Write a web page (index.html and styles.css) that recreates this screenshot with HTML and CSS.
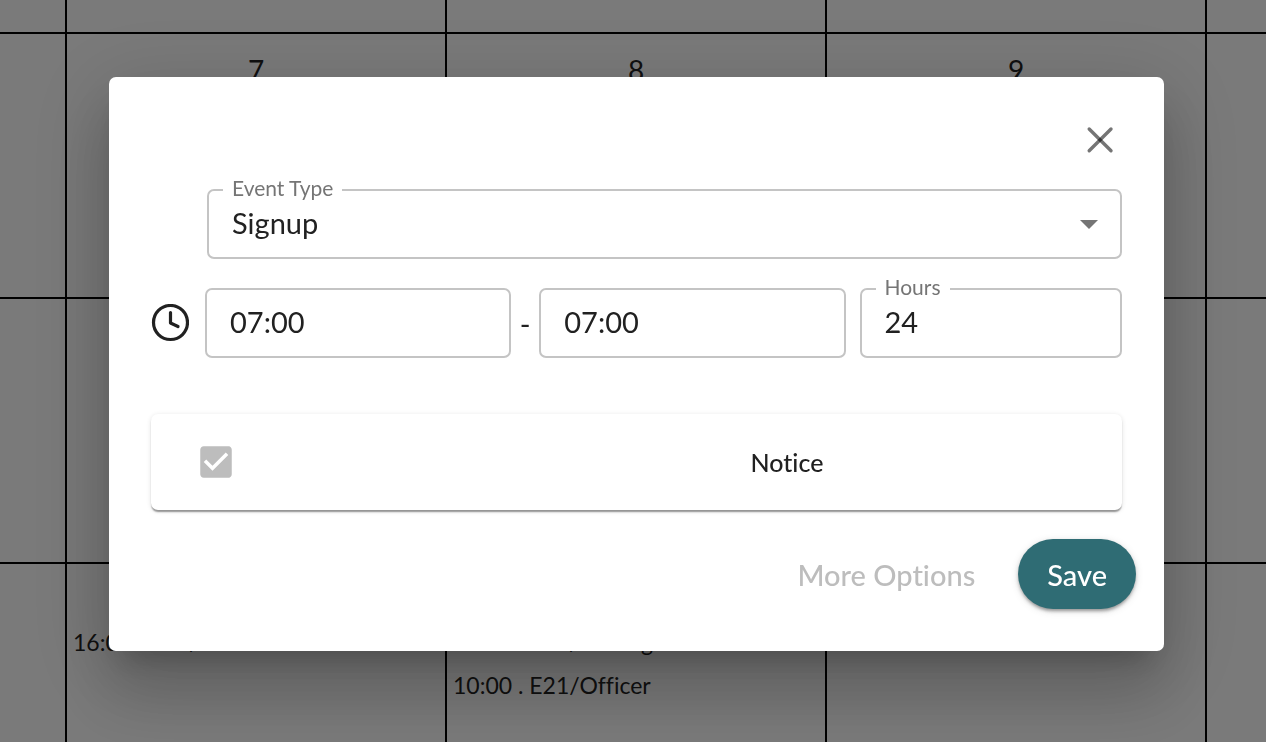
FILE: index.html
```
<!DOCTYPE html>
<html lang="en">
<head>
	<meta charset="UTF-8">
	<title>Calendar</title>
	<link rel="stylesheet" href="styles.css">
</head>
<body>

<table class="calendar">
	<colgroup>
		<col class="edge">
		<col>
		<col>
		<col>
		<col class="edge">
	</colgroup>
	<tr class="first">
		<td></td><td></td><td></td><td></td><td></td>
	</tr>
	<tr>
		<td></td>
		<td><p class="day">7</p></td>
		<td><p class="day">8</p></td>
		<td><p class="day">9</p></td>
		<td></td>
	</tr>
	<tr>
		<td></td>
		<td><p class="day">14</p></td>
		<td><p class="day">15</p></td>
		<td><p class="day">16</p></td>
		<td></td>
	</tr>
	<tr class="last">
		<td></td>
		<td>
			<p class="day">21</p>
			<p class="event">16:00 . E21/Officer</p>
		</td>
		<td>
			<p class="day">22</p>
			<p class="event">07:00 . E21/Driving</p>
			<p class="event">10:00 . E21/Officer</p>
		</td>
		<td><p class="day">23</p></td>
		<td></td>
	</tr>
</table>

<div class="backdrop">
	<form class="dialog" role="dialog" aria-label="Event">
		<div class="top">
			<button type="button" class="close" aria-label="Close">
				<svg width="44" height="44" viewBox="0 0 44 44">
					<path d="M11.2 11L33 32.8"/>
					<path d="M33 11L11.2 32.8"/>
				</svg>
			</button>
		</div>

		<div class="field type">
			<label for="type">Event Type</label>
			<select id="type">
				<option>Signup</option>
			</select>
			<svg class="arrow" width="18" height="9" viewBox="0 0 18 9"><path d="M0 0h18L9 9z"/></svg>
		</div>

		<div class="times">
			<svg class="clock" width="38" height="38" viewBox="0 0 38 38">
				<circle cx="19.5" cy="18.5" r="17"/>
				<path d="M19.5 8.5V19L27 22.5"/>
			</svg>
			<div class="field time">
				<input type="text" value="07:00" aria-label="Start time">
			</div>
			<span class="dash">-</span>
			<div class="field time">
				<input type="text" value="07:00" aria-label="End time">
			</div>
			<div class="field hours">
				<label for="hours">Hours</label>
				<input type="text" id="hours" value="24">
			</div>
		</div>

		<div class="card">
			<div class="check">
				<input type="checkbox" id="notice" checked disabled>
				<svg width="42" height="42" viewBox="0 0 24 24">
					<path d="M19 3H5c-1.11 0-2 .9-2 2v14c0 1.1.89 2 2 2h14c1.11 0 2-.9 2-2V5c0-1.1-.89-2-2-2zm-9 14l-5-5 1.41-1.41L10 14.17l7.59-7.59L19 8l-9 9z"/>
				</svg>
			</div>
			<label class="notice" for="notice">Notice</label>
		</div>

		<div class="actions">
			<button type="button" class="more" disabled>More Options</button>
			<button type="button" class="save">Save</button>
		</div>
	</form>
</div>

</body>
</html>
```
FILE: styles.css
```
* {
	box-sizing: border-box;
}
body {
	margin: 0;
	background-color: #f4f4f4;
	font-family: Lato, "Open Sans", sans-serif;
	font-variant-ligatures: none;
	color: #212121;
}
p {
	margin: 0;
}
button, input, select {
	font-family: inherit;
	font-variant-ligatures: inherit;
	margin: 0;
}

/* calendar */
.calendar {
	width: 100%;
	height: 100vh;
	table-layout: fixed;
	border-collapse: separate;
	border-spacing: 0;
}
.calendar .edge {
	width: 67px;
}
.calendar .edge:last-child {
	width: 59px;
}
.calendar td {
	height: 265px;
	padding: 16px 6px 0;
	vertical-align: top;
	border-right: 2px solid #000;
	border-bottom: 2px solid #000;
}
.calendar td:last-child {
	border-right: 0;
}
.calendar .first td {
	height: 34px;
}
.calendar .last td {
	height: auto;
	border-bottom: 0;
}
.day {
	font-size: 28px;
	line-height: 41px;
	text-align: center;
}
.event {
	font-size: 23px;
	line-height: 43px;
	white-space: nowrap;
}

/* dialog */
.backdrop {
	position: fixed;
	inset: 0;
	padding: 77px 102px 0 109px;
	background-color: rgba(0, 0, 0, .5);
}
.dialog {
	padding: 41px 42px 42px;
	border-radius: 7px;
	background-color: #fff;
	box-shadow: 0 20px 26px -12px rgba(0, 0, 0, .2), 0 42px 66px 5px rgba(0, 0, 0, .14), 0 16px 80px 14px rgba(0, 0, 0, .12);
}
.top {
	display: flex;
	justify-content: flex-end;
	margin-bottom: 27px;
}
.close {
	width: 44px;
	height: 44px;
	padding: 0;
	border: 0;
	background: none;
	cursor: pointer;
}
.close svg {
	display: block;
	stroke: rgba(0, 0, 0, .54);
	stroke-width: 3.4;
	stroke-linecap: round;
}

.field {
	position: relative;
	height: 70px;
}
.field label {
	position: absolute;
	top: -13px;
	left: 16px;
	padding: 0 9px;
	background-color: #fff;
	font-size: 21px;
	line-height: 24px;
	color: #757575;
}
.field input, .field select {
	display: block;
	width: 100%;
	height: 100%;
	padding: 0 23px 3px;
	border: 2px solid #c4c4c4;
	border-radius: 7px;
	background: none;
	appearance: none;
	font-size: 29px;
	color: #212121;
}
.type {
	margin-left: 56px;
}
.arrow {
	position: absolute;
	top: 31px;
	right: 24px;
	fill: #757575;
	pointer-events: none;
}

.times {
	display: flex;
	align-items: center;
	margin-top: 29px;
}
.clock {
	flex: none;
	margin-right: 16px;
	fill: none;
	stroke: #212121;
	stroke-width: 3.2;
	stroke-linecap: round;
	stroke-linejoin: round;
}
.time {
	flex: 7 1 0;
}
.dash {
	width: 28px;
	font-size: 29px;
	text-align: center;
}
.hours {
	flex: 6 1 0;
	margin-left: 14px;
}

.card {
	display: flex;
	align-items: center;
	height: 96px;
	margin-top: 56px;
	border-radius: 7px;
	box-shadow: 0 3px 2px -1px rgba(0, 0, 0, .28), 0 2px 1px 0 rgba(0, 0, 0, .14), 0 1px 5px 0 rgba(0, 0, 0, .12);
}
.check {
	position: relative;
	width: 31%;
	padding-left: 44px;
}
.check input {
	position: absolute;
	width: 42px;
	height: 42px;
	opacity: 0;
}
.check svg {
	display: block;
	fill: #bdbdbd;
}
.notice {
	flex: 1;
	font-size: 25px;
	font-weight: 500;
	text-align: center;
}

.actions {
	display: flex;
	justify-content: flex-end;
	gap: 14px;
	margin: 29px -14px 0 0;
}
.actions button {
	height: 70px;
	padding: 0 29px;
	border: 0;
	border-radius: 35px;
	background: none;
	font-size: 29px;
	font-weight: 500;
}
.actions .more {
	color: #bdbdbd;
}
.actions .save {
	background-color: #2f6c74;
	color: #fff;
	box-shadow: 0 3px 3px -1px rgba(0, 0, 0, .25), 0 2px 4px 0 rgba(0, 0, 0, .14), 0 2px 9px 0 rgba(0, 0, 0, .12);
	cursor: pointer;
}
```
